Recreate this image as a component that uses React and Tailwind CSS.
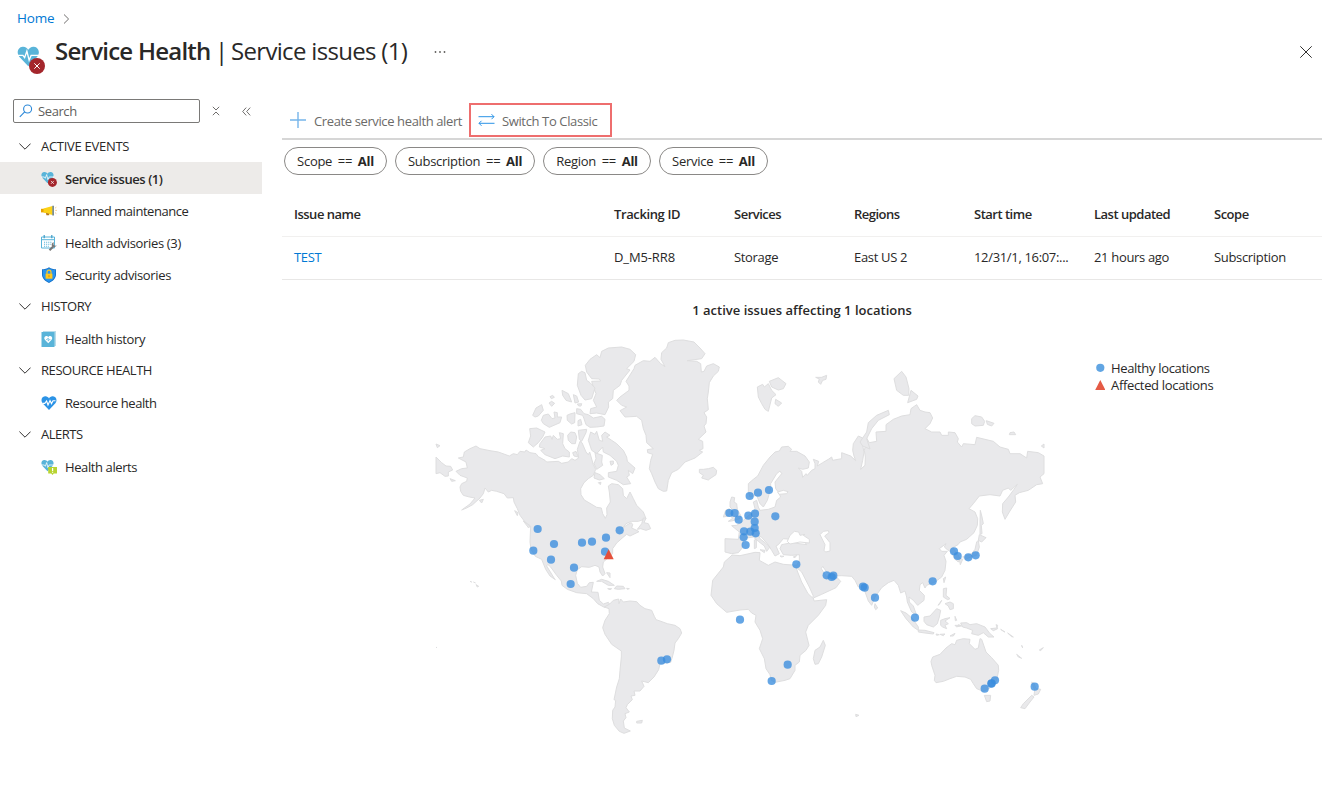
import React from "react";

const NAV = [
  { title: "ACTIVE EVENTS", tracking: "tracking-[-0.28px]", items: [
    { label: "Service issues (1)", icon: "issue", active: true, tracking: "tracking-[-0.45px]" },
    { label: "Planned maintenance", icon: "megaphone", tracking: "tracking-[-0.46px]" },
    { label: "Health advisories (3)", icon: "calendar", tracking: "tracking-[-0.33px]" },
    { label: "Security advisories", icon: "shield", tracking: "tracking-[-0.36px]" },
  ] },
  { title: "HISTORY", tracking: "tracking-[-0.38px]", items: [{ label: "Health history", icon: "book", tracking: "tracking-[-0.35px]" }] },
  { title: "RESOURCE HEALTH", tracking: "tracking-[-0.42px]", items: [{ label: "Resource health", icon: "heart", tracking: "tracking-[-0.42px]" }] },
  { title: "ALERTS", tracking: "tracking-[-0.5px]", items: [{ label: "Health alerts", icon: "alert", tracking: "tracking-[-0.4px]" }] },
];

const FILTERS = [
  { name: "Scope", width: "w-[103px]" },
  { name: "Subscription", width: "w-[140px]" },
  { name: "Region", width: "w-[108px]" },
  { name: "Service", width: "w-[109px]" },
];

const COLUMNS = ["Issue name", "Tracking ID", "Services", "Regions", "Start time", "Last updated", "Scope"];
const ROW = ["TEST", "D_M5-RR8", "Storage", "East US 2", "12/31/1, 16:07:...", "21 hours ago", "Subscription"];

const HEART = "M8 15 L1.6 8.3 C-.6 5.6 .6 1.5 4 1.2 C5.8 1 7.3 2 8 3.4 C8.7 2 10.2 1 12 1.2 C15.4 1.5 16.6 5.6 14.4 8.3Z";

function PulseHeart({ fill }) {
  return (
    <>
      <path d={HEART} fill={fill} />
      <path d="M0 7.4 H4.2 L5.4 9 L7 4.4 L8.6 10.8 L10 7.4 H16" fill="none" stroke="#fff" strokeWidth=".95" />
    </>
  );
}

function NavIcon({ name }) {
  const common = { width: 16, height: 16, viewBox: "0 0 16 16", className: "mt-[1px] shrink-0" };
  switch (name) {
    case "issue":
      return (
        <svg {...common}>
          <g transform="scale(.81)"><PulseHeart fill="#59b4d9" /></g>
          <circle cx="11.4" cy="11.4" r="4.5" fill="#a4262c" />
          <path d="M9.9 9.9l3 3M12.9 9.9l-3 3" stroke="#fff" strokeWidth=".7" />
        </svg>
      );
    case "megaphone":
      return (
        <svg {...common}>
          <path d="M0 5.8H4V9.4H0z" fill="#e8a200" />
          <path d="M2.5 5.6l9-2.6v9l-9-2.6z" fill="#fcd116" />
          <path d="M5 9.8l3.2 1v1.4H5.4z" fill="#b77a18" />
          <path d="M11.4 2.8h1.4v9.6h-1.4z" fill="#56707c" />
          <path d="M14 5.2l1.4-1M14.2 7.4H16M14 9.6l1.4 1" stroke="#f4c47b" strokeWidth=".8" />
        </svg>
      );
    case "calendar":
      return (
        <svg {...common}>
          <path d="M.5 2h13v11H.5zM.5 4.7h13" fill="#fff" stroke="#59b4d9" />
          <path d="M3.2 0v3.3M10.8 0v3.3" stroke="#3c9cc8" strokeWidth="1.2" />
          <path d="M3 7.2h8M3 9.2h7M3 11.2h5" stroke="#59b4d9" strokeWidth="1.1" strokeDasharray="1.1 1" />
          <path d="M8.5 15.2l4-4" stroke="#777" strokeWidth="2.2" />
          <path d="M12.8 7.2c-2 .4-2.7 2.3-1.8 3.8s3.4 1.5 4.7-.4l-2 .1-1.2-1.2z" fill="#7a7a7a" />
        </svg>
      );
    case "shield":
      return (
        <svg {...common}>
          <path d="M8 .2C10 1.6 12.4 2.2 15 2.3V7.5C15 11.5 11.5 14.4 8 16 4.5 14.4 1 11.5 1 7.5V2.3C3.6 2.2 6 1.6 8 .2z" fill="#0f6ec7" />
          <path d="M8 1.2C10 2.4 12 2.9 14.2 3V7.5C14.2 11 11 13.6 8 15 5 13.6 1.8 11 1.8 7.5V3C4 2.9 6 2.4 8 1.2z" fill="#2994ef" />
          <path d="M6 7V5.2a2 2 0 014 0V7" fill="none" stroke="#ffc91f" strokeWidth="1.2" />
          <path d="M4.6 6.7h6.8v5H4.6z" fill="#ffc91f" />
          <path d="M7.5 8.2h1v2h-1z" fill="#d48b00" />
        </svg>
      );
    case "book":
      return (
        <svg {...common}>
          <path d="M2 0h13v15H2z" fill="#b9dcea" />
          <path d="M.5 1h13v15h-13z" fill="#59b4d9" />
          <g transform="translate(3 4.3) scale(.53)"><path d={HEART} fill="#fff" /><path d="M4 8h2l2-3v6l2-3h2" stroke="#59b4d9" strokeWidth="1.3" fill="none" /></g>
        </svg>
      );
    case "heart":
      return (
        <svg {...common}>
          <path d={HEART} fill="#2b93e6" />
          <path d="M1.5 8.3H3.8L5.6 6 7 10 9 5.5 10.5 8.6 12 5.7H14.5" fill="none" stroke="#fff" strokeWidth="1.15" />
        </svg>
      );
    default:
      return (
        <svg {...common}>
          <g transform="scale(.81)"><PulseHeart fill="#59b4d9" /></g>
          <path d="M7.2 8H16v6.6h-3.2L11.5 16l-1.3-1.4h-3z" fill="#b8d432" />
          <path d="M11.6 9v3M11.6 12.7v1" stroke="#fff" strokeWidth="1.2" />
        </svg>
      );
  }
}

/* Outlines use a grid of three units per pixel. */
const LAND = [
  // North America
  "M85,368 100,365 103,350 120,340 138,332 150,340 180,346 205,350 238,362 250,355 262,358 270,348 285,350 288,344 300,352 318,355 325,364 345,375 350,380 385,378 395,384 415,380 425,370 435,375 446,368 442,342 450,318 456,322 468,350 475,358 479,350 490,388 497,402 490,420 475,430 462,442 452,460 453,478 463,494 480,504 500,516 514,518 518,535 526,549 531,538 530,518 541,500 538,470 535,452 545,445 565,448 578,460 580,480 590,490 600,470 610,490 620,510 640,530 648,550 625,558 605,558 588,565 578,578 592,568 604,562 608,568 605,578 618,584 627,589 600,602 590,597 578,607 560,623 548,640 548,655 535,667 520,680 518,695 525,715 518,722 510,710 507,695 495,690 478,696 455,694 442,703 437,720 442,744 452,756 470,753 478,742 490,741 484,770 504,771 508,795 520,806 535,801 540,808 523,816 503,805 490,790 470,775 440,772 412,762 396,750 394,737 380,720 362,695 353,687 350,692 360,708 372,728 376,733 360,722 347,702 335,672 316,663 303,642 300,620 302,572 285,560 270,540 262,520 252,500 250,487 232,488 222,475 200,468 185,465 175,470 165,458 160,475 150,488 128,508 110,518 95,524 120,506 135,488 118,485 100,480 92,468 90,455 95,445 110,438 112,428 90,420 78,408 95,400 112,398 108,380Z",
  // South America
  "M523,815 538,807 550,795 566,791 567,805 572,791 580,800 600,797 620,799 630,810 645,820 665,825 673,843 678,853 690,857 712,865 735,870 750,880 755,893 745,910 735,923 732,945 727,965 722,981 690,985 686,1003 672,1025 655,1042 635,1037 642,1053 630,1067 612,1067 615,1080 603,1082 607,1093 592,1108 588,1117 598,1130 585,1135 588,1147 580,1157 583,1178 601,1187 582,1194 568,1188 553,1170 547,1150 548,1125 555,1115 557,1095 552,1093 560,1055 568,1030 570,1005 574,965 574,947 545,927 525,897 518,877 525,855 538,835 537,820Z",
  // Greenland
  "M560,195 570,185 597,165 597,152 588,138 612,100 615,90 640,76 660,78 675,66 692,85 705,94 693,72 695,52 710,38 715,22 735,15 760,14 792,20 810,38 825,55 815,70 772,76 800,78 812,85 814,110 822,108 830,92 850,85 868,95 865,108 850,122 838,142 835,170 832,190 835,223 822,232 830,245 828,265 822,272 828,290 805,312 818,318 819,340 808,345 818,350 795,368 765,380 745,402 725,412 715,435 710,467 700,468 685,460 675,440 665,415 658,400 662,375 668,357 653,352 652,343 670,340 650,322 648,300 640,280 635,255 620,243 585,245 570,226 590,215 575,210Z",
  // Arctic islands
  "M466,90 480,72 500,58 510,67 515,48 535,38 575,35 600,42 617,58 612,78 590,100 600,104 575,135 570,150 550,165 548,190 535,200 536,215 525,238 500,233 480,235 482,220 500,215 490,195 498,175 490,155 485,138 512,137 508,131 485,130 470,110Z",
  "M445,115 455,108 465,112 470,135 480,142 495,158 485,190 465,194 453,180 442,150Z",
  "M440,220 452,222 462,235 475,238 490,248 515,243 525,252 522,272 500,275 480,276 468,268 462,250 458,240 440,235Z",
  "M340,240 355,236 366,250 375,248 372,230 382,232 382,245 395,245 390,262 358,276 340,265 334,255Z",
  "M308,240 318,218 335,208 340,225 325,242 315,245Z",
  "M396,165 415,175 425,200 408,195 398,180Z",
  "M430,178 440,182 446,200 435,203Z M357,203 365,198 374,204 365,213Z M360,184 368,180 373,186 364,190Z M442,206 455,205 453,212 446,212Z",
  "M411,240 420,236 435,232 434,262 425,266 412,255Z M444,256 452,252 456,268 444,272Z",
  "M299,280 320,278 345,290 338,305 325,322 310,335 295,322 302,302Z",
  "M330,325 345,305 362,302 366,312 370,300 382,312 392,310 388,292 400,295 398,325 405,340 418,350 418,365 398,362 375,370 345,358 332,345 345,340 328,335Z",
  "M413,300 422,290 435,292 440,305 436,325 425,325 415,315Z",
  "M445,285 470,282 468,292 455,318 448,312Z M428,352 438,348 445,365 432,362Z",
  "M475,315 482,290 495,297 500,288 508,315 518,318 515,300 525,290 540,300 530,305 545,315 560,325 580,345 590,365 592,378 615,398 608,415 595,405 598,420 590,425 602,445 580,448 560,435 535,425 535,412 560,408 565,390 560,378 540,360 520,350 518,335 500,355 485,345Z",
  "M495,352 517,360 515,380 518,390 500,402 492,385 498,370Z M540,378 550,377 550,386 543,390Z M495,412 510,418 523,430 508,434 492,428Z M505,442 513,441 511,448Z",
  "M18,365 35,382 48,392 62,393 68,404 55,410 55,422 45,423 30,412 18,415Z M18,326 30,331 22,337Z M60,430 76,436 65,438Z M148,495 160,492 155,503Z M254,526 264,532 262,541Z M280,557 300,572 296,578Z",
  "M655,565 662,580 648,585 632,580 622,582 635,565 640,548 648,548 642,562Z",
  // Iceland
  "M808,402 820,402 835,400 850,396 860,405 858,418 840,430 835,434 815,428 820,420 808,412Z",
  // Caribbean and Pacific
  "M500,738 515,732 535,738 553,750 535,750 515,738Z M560,752 580,753 585,760 565,762 553,760Z M533,760 545,760 540,763Z M590,759 598,760 592,762Z M530,712 540,713 540,727Z",
  "M130,740 137,743 M138,748 146,753 142,755Z M120,738 125,740Z M18,936 21,937Z M620,1158 637,1155 635,1163 620,1163Z",
  // Eurasia and Africa
  "M955,445 970,432 983,422 1000,390 1020,365 1035,350 1048,347 1055,335 1075,333 1085,342 1080,348 1100,348 1125,362 1138,380 1135,398 1118,402 1105,398 1115,408 1118,426 1128,415 1132,420 1145,405 1155,400 1155,385 1150,372 1166,378 1162,392 1178,382 1195,372 1205,365 1208,375 1235,370 1235,352 1262,362 1277,376 1272,362 1268,345 1270,325 1285,302 1298,308 1298,330 1302,350 1298,375 1292,402 1305,390 1306,365 1303,345 1308,325 1308,305 1318,322 1340,318 1338,290 1368,288 1368,268 1390,252 1415,242 1440,238 1443,220 1460,208 1470,225 1485,230 1500,232 1508,248 1500,265 1485,280 1505,290 1530,290 1535,300 1555,300 1555,290 1575,292 1585,310 1582,320 1595,335 1600,325 1635,328 1640,306 1690,318 1710,335 1735,342 1740,355 1770,355 1790,368 1793,348 1825,352 1842,362 1842,415 1830,425 1838,445 1820,448 1795,465 1768,472 1755,480 1757,500 1738,530 1725,552 1717,530 1718,505 1735,485 1752,462 1762,447 1742,465 1735,458 1718,465 1710,482 1680,478 1648,482 1630,505 1617,520 1635,530 1643,550 1642,570 1632,592 1610,612 1590,620 1584,628 1568,637 1580,652 1590,670 1585,680 1573,670 1565,650 1552,643 1543,635 1548,625 1528,640 1535,648 1552,648 1542,660 1548,678 1545,705 1535,725 1515,740 1490,750 1485,758 1478,742 1470,748 1468,765 1483,780 1482,795 1463,810 1450,795 1437,785 1438,800 1450,812 1460,840 1445,830 1432,800 1430,785 1425,767 1412,773 1405,750 1392,735 1375,742 1355,757 1335,785 1325,810 1315,797 1300,755 1285,755 1275,735 1265,723 1235,721 1208,722 1190,710 1178,693 1174,700 1188,722 1205,733 1215,720 1232,738 1218,757 1175,777 1150,788 1152,797 1190,793 1187,810 1165,840 1135,870 1127,890 1137,930 1128,945 1110,960 1108,980 1095,990 1095,1005 1080,1030 1065,1035 1035,1041 1024,1035 1020,1018 1008,1000 1003,970 988,940 998,910 990,885 975,860 978,840 965,833 955,822 930,824 890,831 860,805 843,780 848,735 880,695 883,680 900,665 906,659 930,661 975,651 990,652 988,675 1015,690 1035,680 1060,687 1100,690 1108,675 1108,658 1085,660 1060,658 1050,640 1055,628 1085,622 1130,628 1120,615 1060,610 1045,628 1038,632 1048,655 1035,662 1025,645 1012,625 995,606 985,600 990,610 1005,622 1020,635 1010,648 1003,632 985,618 970,605 950,608 940,618 935,640 925,652 905,655 885,650 885,610 925,612 928,590 905,571 920,570 935,560 950,545 970,530 975,520 970,500 980,495 985,515 990,525 1015,522 1035,515 1040,495 1052,485 1045,470 1037,460 1035,440 1055,415 1050,407 1040,415 1022,445 1022,460 1012,495 1000,515 990,505 980,480 960,485 955,470Z",
  // Britain and Ireland
  "M900,500 905,485 914,487 912,500 920,505 922,522 932,540 930,550 905,557 895,558 907,550 902,535 910,525 900,515Z M880,545 887,525 898,520 900,535 895,542Z",
  // Svalbard, Franz Josef and Novaya Zemlya
  "M982,155 998,147 1003,155 1015,145 1025,165 1038,178 1025,188 1015,228 1005,222 995,205 985,185Z M1018,138 1045,127 1068,145 1060,160 1045,164 1025,155Z M1037,192 1055,203 1045,213 1035,205Z",
  "M1157,126 1175,126 1190,120 1188,132 1178,135 1172,147 1165,140 1168,131Z",
  "M1290,320 1310,290 1315,262 1340,240 1375,225 1378,238 1345,255 1325,280 1310,310 1320,341 1298,332Z",
  "M1392,130 1415,108 1428,125 1437,160 1436,180 1420,180 1400,165Z M1443,165 1464,182 1460,192 1433,202Z",
  "M1625,250 1635,241 1655,245 1664,258 1660,270 1635,272 1625,265Z M1669,256 1692,264 1685,272 1672,267Z M1740,292 1752,290 1757,298 1738,298Z M1834,332 1842,326 1842,338Z",
  // Sakhalin, Japan, Taiwan
  "M1651,525 1656,545 1660,565 1654,570 1656,595 1650,597 1650,560Z M1648,598 1668,607 1655,620 1645,615Z M1645,615 1648,635 1640,660 1625,664 1605,672 1598,665 1625,655 1635,642 1640,620Z M1587,668 1598,672 1591,688Z M1540,730 1547,725 1542,742Z",
  // Southeast Asia
  "M1412,826 1428,833 1448,850 1465,875 1465,885 1450,875 1428,850Z M1465,884 1485,885 1512,892 1510,896 1485,893 1465,890Z M1482,845 1500,842 1520,820 1532,825 1528,845 1522,865 1510,875 1490,868 1482,858Z",
  "M1540,760 1550,758 1548,780 1560,790 1553,793 1540,785Z M1545,805 1560,800 1570,805 1570,820 1560,823 1555,812Z M1524,810 1535,795 1530,805Z M1532,855 1545,850 1560,847 1545,857 1555,865 1545,870 1550,880 1538,875 1532,870Z",
  "M1575,843 1580,855 1576,856Z M1575,870 1592,870 1580,875Z M1530,897 1545,896 1540,901Z M1560,902 1575,894 1570,902Z M1518,896 1528,898 1520,900Z M1585,868 1595,872 1585,873Z",
  "M1592,863 1610,862 1620,868 1640,865 1665,875 1680,895 1692,905 1675,905 1660,892 1645,900 1625,895 1628,885 1610,878 1598,875Z M1682,880 1700,878 1703,870 1698,868 1703,880 1690,886Z M1712,882 1725,890 1720,888Z M1733,893 1750,905 1745,904Z",
  // Australia and New Zealand
  "M1503,978 1508,965 1530,957 1548,938 1565,925 1575,928 1580,915 1600,910 1620,912 1618,925 1635,942 1645,938 1650,910 1655,912 1668,950 1685,967 1705,990 1706,1005 1700,1035 1680,1058 1660,1068 1640,1060 1630,1045 1622,1032 1605,1025 1580,1023 1560,1030 1540,1038 1518,1042 1513,1035 1515,1020 1505,990Z M1663,1080 1682,1080 1680,1097 1670,1099Z",
  "M1805,1040 1812,1044 1818,1060 1832,1062 1825,1076 1812,1080 1814,1065Z M1805,1080 1812,1085 1800,1100 1785,1120 1772,1117 1780,1105Z",
  "M1775,930 1778,938Z M1760,957 1775,969 1765,965Z M1828,944 1840,937 1832,946Z M1277,1137 1287,1140 1278,1144Z",
  // Madagascar and Sri Lanka
  "M1180,915 1186,930 1175,965 1165,985 1155,987 1150,970 1155,945 1170,935Z M1335,805 1343,818 1337,823 1333,815Z",
  // Mediterranean islands
  "M973,614 979,612 979,637 973,640Z M990,643 1005,645 1003,652Z M1050,662 1062,663 1055,665Z M1090,665 1100,660 1095,667Z",
];

const SEAS = [
  "M1098,695 1115,710 1138,755 1150,782 1147,787 1134,775 1115,740 1103,710Z",
  "M1072,618 1080,600 1093,588 1106,590 1110,600 1125,597 1120,600 1138,612 1138,623 1110,620 1080,626Z",
  "M1170,598 1180,588 1195,586 1197,592 1184,602 1200,622 1200,647 1187,650 1182,645 1185,628Z",
  "M1043,470 1060,465 1074,469 1070,475 1047,477Z",
];

const SITES = [
  [323, 581], [372, 626], [310, 646], [363, 673], [432, 697], [422, 746], [456, 622], [486, 619], [528, 607], [569, 585], [525, 649],
  [694, 976], [711, 972], [930, 853], [1025, 1037], [1073, 988],
  [898, 533], [914, 533], [926, 553], [955, 541], [975, 535], [974, 559], [974, 578], [977, 594], [961, 589], [942, 588], [941, 606], [947, 629],
  [959, 482], [984, 472], [1017, 464], [1036, 543], [1099, 687], [1190, 720], [1210, 721], [1205, 725],
  [1299, 754], [1304, 757], [1335, 787], [1455, 847], [1508, 738], [1572, 648], [1583, 662], [1615, 666], [1637, 660],
  [1664, 1060], [1684, 1045], [1685, 1044], [1695, 1035], [1814, 1054],
];

function WorldMap() {
  return (
    <svg width="620" height="405" viewBox="0 -1 1860 1215" className="ml-[148px] shrink-0">
      <g fill="#e9e9eb" stroke="#dededf" strokeWidth="3" strokeLinejoin="round">
        {LAND.map((d, i) => <path key={i} d={d} />)}
      </g>
      <g fill="#fff" stroke="#dededf" strokeWidth="3" strokeLinejoin="round">
        {SEAS.map((d, i) => <path key={i} d={d} />)}
      </g>
      <g fill="#3a8dde" fillOpacity=".78">
        {SITES.map(([x, y], i) => <circle key={i} cx={x} cy={y} r="12.3" />)}
      </g>
      <path d="M536 642L551 672H521Z" fill="#e4503b" />
    </svg>
  );
}

function Sidebar() {
  return (
    <aside className="w-[262px] shrink-0 pt-[17px]">
      <div className="flex h-6 items-center pl-[13px]">
        <div className="flex h-6 w-[187px] items-center rounded-[2px] border border-[#7a7977] pl-[5px]">
          <svg width="14" height="14" viewBox="0 0 14 14" fill="none" stroke="#2b88d8" strokeWidth="1.1">
            <circle cx="8.6" cy="5" r="4" />
            <path d="M5.7 7.9L.8 12.8" />
          </svg>
          <span className="ml-[5px] text-[13px] tracking-[-0.4px] text-[#605e5c]">Search</span>
        </div>
        <svg width="8" height="10" viewBox="0 0 8 10" className="ml-3" fill="none" stroke="#605e5c" strokeWidth=".9">
          <path d="M.8 .8L4 4 7.2.8M.8 9.2L4 6 7.2 9.2" />
        </svg>
        <svg width="9" height="9" viewBox="0 0 9 9" className="ml-[22px]" fill="none" stroke="#605e5c" strokeWidth=".9">
          <path d="M4.2.6L.7 4.5 4.2 8.4M8.2.6L4.7 4.5 8.2 8.4" />
        </svg>
      </div>
      <nav className="mt-[7px]">
        {NAV.map((group) => (
          <div key={group.title}>
            <div className="flex h-8 items-center pl-[19px]">
              <svg width="12" height="7" viewBox="0 0 12 7" fill="none" stroke="#323130" strokeWidth="1">
                <path d="M.4.6L6 6.2 11.6.6" />
              </svg>
              <span className={`ml-[10px] text-[13px] ${group.tracking}`}>{group.title}</span>
            </div>
            {group.items.map((item) => (
              <div key={item.label} className={`flex h-8 items-center pl-[41px] ${item.active ? "bg-[#edebe9] font-semibold" : ""}`}>
                <NavIcon name={item.icon} />
                <span className={`ml-2 pt-[2px] text-[13px] ${item.tracking}`}>{item.label}</span>
              </div>
            ))}
          </div>
        ))}
      </nav>
    </aside>
  );
}

export default function App() {
  return (
    <div className="flex h-[791px] w-[1327px] flex-col overflow-hidden bg-white font-['Open_Sans','Noto_Sans',sans-serif] text-[13px] leading-5 whitespace-nowrap text-[#292827]">
      <header className="flex h-[82px] shrink-0 flex-col">
        <div className="flex h-[36px] items-center pl-[17px]">
          <a className="text-[13.5px] tracking-[-0.2px] text-[#0078d4]">Home</a>
          <svg width="7" height="10" viewBox="0 0 7 10" className="mt-[2px] ml-[9px]" fill="none" stroke="#605e5c" strokeWidth=".9">
            <path d="M1 .5L5.6 5 1 9.5" />
          </svg>
        </div>
        <div className="flex h-[46px] items-start pl-[17px]">
          <svg width="28" height="29" viewBox="0 0 28 29" className="mt-[9px] shrink-0">
            <g transform="scale(1.41)"><PulseHeart fill="#59b4d9" /></g>
            <circle cx="20" cy="21" r="8" fill="#a4262c" />
            <path d="M17.3 18.3l5.4 5.4M22.7 18.3l-5.4 5.4" stroke="#fff" strokeWidth="1" />
          </svg>
          <h1 className="-mt-[1px] ml-[10px] flex text-[24px] leading-8">
            <span className="w-[157px] font-semibold tracking-[-0.75px]">Service Health</span>
            <span className="ml-[3px] w-[13px]">|</span>
            <span className="ml-[3px] w-[178px] tracking-[-0.68px]">Service issues (1)</span>
          </h1>
          <svg width="12" height="4" viewBox="0 0 12 4" className="mt-[14px] ml-[25px]" fill="#605e5c">
            <circle cx="1.5" cy="2" r=".9" /><circle cx="6" cy="2" r=".9" /><circle cx="10.5" cy="2" r=".9" />
          </svg>
          <svg width="12" height="12" viewBox="0 0 12 12" className="mt-[10px] mr-[15px] ml-auto" stroke="#323130" strokeWidth="1">
            <path d="M.3.3L11.7 11.7M11.7.3L.3 11.7" />
          </svg>
        </div>
      </header>
      <div className="flex min-h-0 flex-1">
        <Sidebar />
        <main className="ml-5 w-[1040px]">
          <div className="flex h-[58px] items-end border-b-2 border-[#d6d6d6]">
            <div className="mb-[1px] flex h-[35px] w-[187px] items-center pl-2">
              <svg width="16" height="16" viewBox="0 0 16 16" stroke="#76b5ea" strokeWidth="1.4"><path d="M8 0V16M0 8H16" /></svg>
              <span className="ml-2 pt-[2px] text-[13px] tracking-[-0.38px] text-[#6b6a68]">Create service health alert</span>
            </div>
            <div className="mb-[1px] flex h-[34px] w-[143px] items-center border-2 border-[#ee6e6e] pl-[7px]">
              <svg width="17" height="12" viewBox="0 0 17 12" className="-mt-[1px]" fill="none" stroke="#2b93e6" strokeWidth="1"><path d="M.5 2.7H16M13.5.2L16 2.7 13.5 5.2M16.5 9.3H1M3.5 6.8L1 9.3 3.5 11.8" /></svg>
              <span className="ml-[7px] pt-[1px] text-[13px] tracking-[-0.37px] text-[#6b6a68]">Switch To Classic</span>
            </div>
          </div>
          <div className="flex gap-2 pt-[7px] pl-[2px]">
            {FILTERS.map((f) => (
              <div key={f.name} className={`flex h-7 items-center justify-center rounded-full border border-[#8a8886] ${f.width}`}>
                <span className="tracking-[-0.28px] [word-spacing:2.6px]">{f.name} == <b className="font-bold">All</b></span>
              </div>
            ))}
          </div>
          <div className="mt-[18px] grid h-11 grid-cols-[320px_repeat(5,120px)_1fr] items-center border-b border-[#f1f0ef] pb-[2px] pl-3 font-semibold tracking-[-0.5px]">
            {COLUMNS.map((c) => <div key={c} className={c === "Tracking ID" ? "tracking-[-0.38px]" : ""}>{c}</div>)}
          </div>
          <div className="grid h-[43px] grid-cols-[320px_repeat(5,120px)_1fr] items-center border-b border-[#e8e7e6] pb-[2px] pl-3 tracking-[-0.33px]">
            {ROW.map((c, i) => <div key={c} className={i === 0 ? "text-[#0078d4]" : i === 1 ? "tracking-[-0.12px]" : ""}>{c}</div>)}
          </div>
          <div className="mt-5 h-5 text-center font-semibold tracking-[0.01px]">1 active issues affecting 1 locations</div>
          <div className="mt-[15px] flex items-start">
            <WorldMap />
            <div className="mt-[24px] ml-[45px] tracking-[-0.33px]">
              <div className="flex h-[17px] items-center gap-[6px]">
                <svg width="10" height="10" viewBox="0 0 10 10"><circle cx="5.3" cy="4.8" r="4.1" fill="#61a5e3" /></svg>Healthy locations
              </div>
              <div className="flex h-[17px] items-center gap-[6px]">
                <svg width="10" height="10" viewBox="0 0 10 10"><path d="M5.3 0L10.4 10H.2Z" fill="#e55a45" /></svg>Affected locations
              </div>
            </div>
          </div>
        </main>
      </div>
    </div>
  );
}
